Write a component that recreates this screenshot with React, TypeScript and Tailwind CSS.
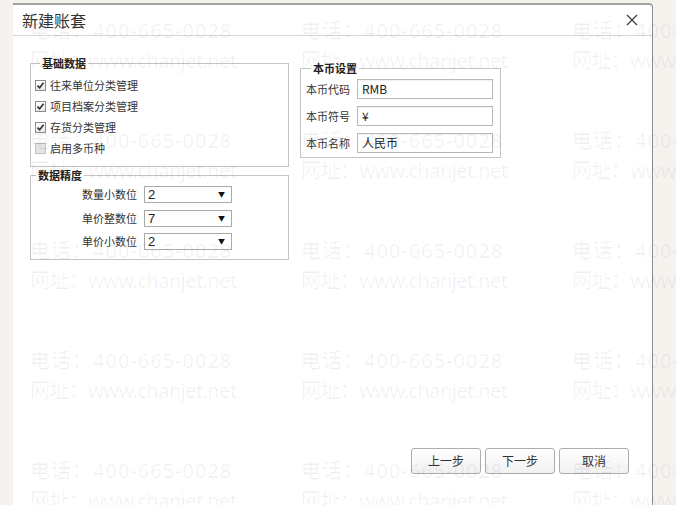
import type { ReactNode } from 'react';

const cjk = "font-['Noto_Sans_CJK_SC','Noto_Sans',sans-serif]";

const baseItems = [
  { label: '往来单位分类管理', checked: true },
  { label: '项目档案分类管理', checked: true },
  { label: '存货分类管理', checked: true },
  { label: '启用多币种', checked: false },
];

const precision = [
  { label: '数量小数位', value: '2' },
  { label: '单价整数位', value: '7' },
  { label: '单价小数位', value: '2' },
];

const currency = [
  { label: '本币代码', value: 'RMB' },
  { label: '本币符号', value: '¥' },
  { label: '本币名称', value: '人民币' },
];

function Group({ title, className, children }: { title: string; className: string; children: ReactNode }) {
  return (
    <fieldset className={`border border-[#c4c4c4] ${className}`}>
      <legend className="ml-[5px] px-[2px] text-[11px] font-bold leading-[16px] text-[#222]">{title}</legend>
      {children}
    </fieldset>
  );
}

function Check({ checked }: { checked: boolean }) {
  if (!checked) {
    return <span className="h-[11px] w-[11px] shrink-0 border border-[#c2c2c2] bg-[#e4e4e4]" />;
  }
  return (
    <span className="flex h-[11px] w-[11px] shrink-0 items-center justify-center border border-[#8c8c8c] bg-gradient-to-b from-white to-[#e8e8e8]">
      <svg width="9" height="9" viewBox="0 0 9 9">
        <path d="M1.5 4.6 L3.6 6.8 L7.6 1.8" fill="none" stroke="#333" strokeWidth="1.6" />
      </svg>
    </span>
  );
}

// faint contact-info stamp tiled over the whole window
function Watermark() {
  const cells = Array.from({ length: 15 });
  return (
    <div className="pointer-events-none absolute inset-0 overflow-hidden">
      <div className="grid grid-cols-[271px_271px_271px] auto-rows-[110px] pl-[30px] pt-[16px]">
        {cells.map((_, i) => (
          <div
            key={i}
            className="whitespace-nowrap font-['Noto_Sans','Noto_Sans_CJK_SC',sans-serif] text-[20px] leading-[30px] text-black/[0.06]"
          >
            <div className="tracking-[1px]">电话：400-665-0028</div>
            <div className="tracking-[-0.6px]">网址：www.chanjet.net</div>
          </div>
        ))}
      </div>
    </div>
  );
}

export default function App() {
  return (
    <div className={`relative h-[505px] w-[676px] overflow-hidden bg-[#f6f3ef] ${cjk}`}>
      <div className="ml-[13px] mt-[3px] flex h-[502px] w-[640px] flex-col rounded-tr-[4px] border-r border-t-2 border-r-[#8e8e8e] border-t-[#a2a2a2] bg-white">
        <header className="flex h-[31px] shrink-0 items-center justify-between border-b border-[#d6d6d6] pl-[9px] pr-[14px]">
          <span className="text-[16px] leading-none text-[#333]">新建账套</span>
          <svg width="12" height="12" viewBox="0 0 12 12" className="mt-[-1px]">
            <path d="M1 1 L11 11 M11 1 L1 11" stroke="#444" strokeWidth="1.4" />
          </svg>
        </header>

        <div className="flex flex-1 flex-col">
          <div className="flex items-start gap-[11px] pl-[17px] pt-[19px]">
            <div className="flex w-[259px] flex-col">
              <Group title="基础数据" className="pb-[7px] pl-[4px] pt-[4px]">
                {baseItems.map((item) => (
                  <label key={item.label} className="flex h-[21px] items-center gap-[4px] text-[11px] text-[#333]">
                    <Check checked={item.checked} />
                    {item.label}
                  </label>
                ))}
              </Group>

              <Group title="数据精度" className="flex flex-col gap-[6.5px] pb-[9px] pt-[3px]">
                {precision.map((row) => (
                  <div key={row.label} className="flex items-center gap-[7px]">
                    <span className="w-[106px] text-right text-[11px] leading-none text-[#333]">{row.label}</span>
                    <div className="flex h-[17px] w-[88px] items-center justify-between border border-[#a9a9a9] bg-white pl-[3px] pr-[6px]">
                      <span className="font-['Liberation_Sans',sans-serif] text-[13px] leading-none text-[#222]">{row.value}</span>
                      <span className="text-[7px] leading-none text-[#111]">▼</span>
                    </div>
                  </div>
                ))}
              </Group>
            </div>

            <Group title="本币设置" className="mt-[5px] flex w-[201px] flex-col gap-[7px] pb-[4px] pl-[5px] pr-[7px] pt-[3px]">
              {currency.map((row) => (
                <div key={row.label} className="flex items-center gap-[7px]">
                  <span className="w-[44px] text-[11px] leading-none text-[#333]">{row.label}</span>
                  <div className="flex h-[20px] w-[136px] items-center border border-[#b8b8b8] bg-white pl-[4px] text-[12px] text-[#222] shadow-[inset_0_1px_1px_rgba(0,0,0,0.06)]">
                    {row.value}
                  </div>
                </div>
              ))}
            </Group>
          </div>

          <div className="mb-[31px] mt-auto flex justify-end gap-[4px] pr-[23px]">
            {['上一步', '下一步', '取消'].map((text) => (
              <button
                key={text}
                type="button"
                className="h-[26px] w-[70px] rounded-[3px] border border-[#acacac] bg-gradient-to-b from-white to-[#f1f1f1] text-[12px] text-[#333]"
              >
                {text}
              </button>
            ))}
          </div>
        </div>
      </div>

      <Watermark />
    </div>
  );
}
